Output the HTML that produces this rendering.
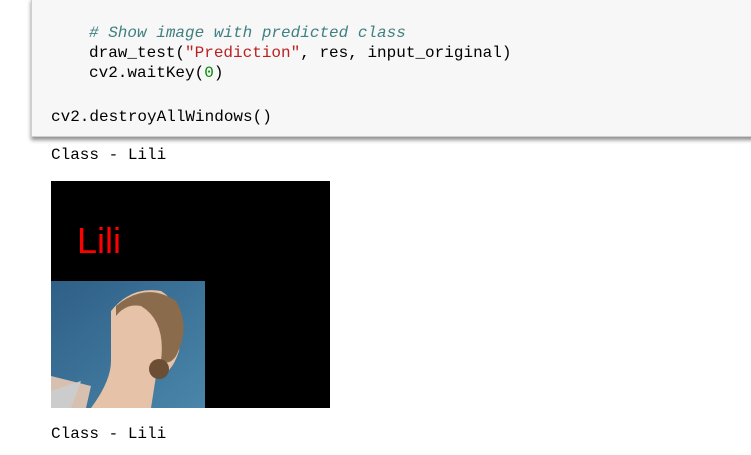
<!DOCTYPE html>
<html><head><style>
body{margin:0;width:751px;height:455px;background:#fff;overflow:hidden;position:relative;font-family:"Liberation Mono",monospace;font-size:16px}
.cell{position:absolute;left:31px;top:-2px;width:740px;height:137px;background:#f7f7f7;border:1px solid #cfcfcf;box-shadow:0 3px 4px rgba(0,0,0,0.45)}
.l{position:absolute;white-space:pre;line-height:20px;color:#000}
.c{color:#408080;font-style:italic}
.s{color:#ba2121}
.n{color:#080}
.img{position:absolute;left:51px;top:181px;width:279px;height:227px;background:#000}
</style></head><body>
<div class="cell"></div>
<div class="l" style="left:89px;top:23px"><span class="c"># Show image with predicted class</span></div>
<div class="l" style="left:89px;top:43px">draw_test(<span class="s">"Prediction"</span>, res, input_original)</div>
<div class="l" style="left:89px;top:63px">cv2.waitKey(<span class="n">0</span>)</div>
<div class="l" style="left:51px;top:107px">cv2.destroyAllWindows()</div>
<div class="l" style="left:51px;top:145px">Class - Lili</div>
<div class="img">
<div style="position:absolute;left:26px;top:42px;color:#f00;font-family:'Liberation Sans',sans-serif;font-size:36px;line-height:36px">Lili</div>
<svg style="position:absolute;left:0;top:100px" width="154" height="127" viewBox="0 0 154 127">
<defs><linearGradient id="bg" x1="0" y1="0" x2="1" y2="1"><stop offset="0" stop-color="#2f5f86"/><stop offset="1" stop-color="#4a86aa"/></linearGradient></defs>
<rect width="154" height="127" fill="url(#bg)"/>
<path d="M60 30 Q80 5 110 10 Q135 25 128 70 Q120 95 105 95 L100 127 L40 127 Q60 100 60 80 Z" fill="#e6c2a8"/>
<path d="M65 25 Q95 0 125 20 Q140 45 125 75 Q118 85 110 80 Q115 40 90 25 Q75 22 65 35 Z" fill="#8a6b4c"/>
<ellipse cx="108" cy="88" rx="10" ry="10" fill="#6b4e34"/>
<path d="M0 95 Q20 100 40 105 L35 127 L0 127 Z" fill="#d8c0b0"/>
<path d="M0 110 L30 100 L20 127 L0 127Z" fill="#ccc"/>
</svg>
</div>
<div class="l" style="left:51px;top:424px">Class - Lili</div>
</body></html>
